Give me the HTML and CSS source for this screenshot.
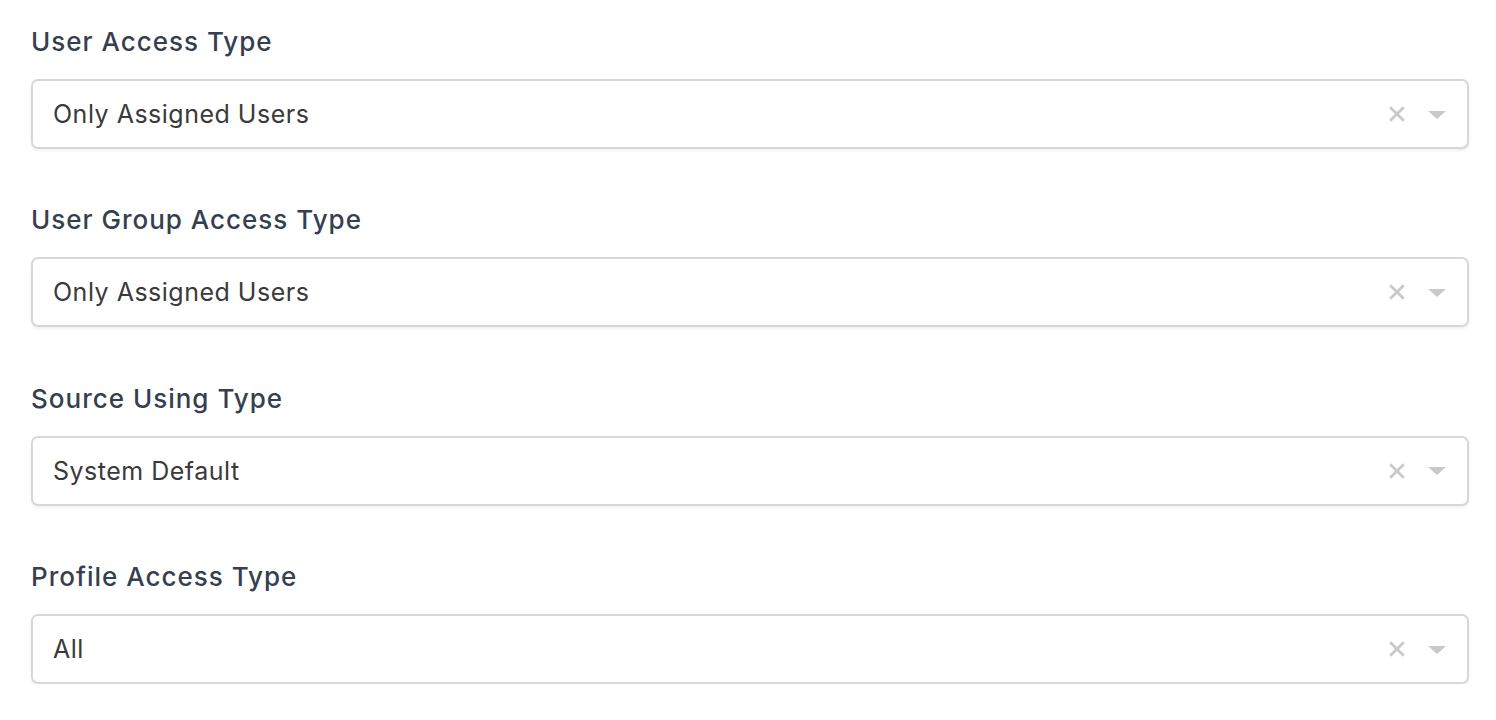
FILE: index.html
```html
<!DOCTYPE html>
<html lang="en">
<head>
<meta charset="utf-8">
<title>Access settings</title>
<link rel="stylesheet" href="styles.css">
</head>
<body>
<div class="form">
  <div class="field">
    <div class="label">User Access Type</div>
    <div class="select">
      <span class="value">Only Assigned Users</span>
      <span class="controls">
        <svg class="clear" viewBox="0 0 16 16" width="16" height="16"><path d="M1.2 1.2 L14.8 14.8 M14.8 1.2 L1.2 14.8" stroke="currentColor" stroke-width="2.8" stroke-linecap="butt"/></svg>
        <svg class="caret" viewBox="0 0 18 10" width="18" height="10"><path d="M0 1 H18 L9 9 Z" fill="currentColor"/></svg>
      </span>
    </div>
  </div>
  <div class="field">
    <div class="label">User Group Access Type</div>
    <div class="select">
      <span class="value">Only Assigned Users</span>
      <span class="controls">
        <svg class="clear" viewBox="0 0 16 16" width="16" height="16"><path d="M1.2 1.2 L14.8 14.8 M14.8 1.2 L1.2 14.8" stroke="currentColor" stroke-width="2.8" stroke-linecap="butt"/></svg>
        <svg class="caret" viewBox="0 0 18 10" width="18" height="10"><path d="M0 1 H18 L9 9 Z" fill="currentColor"/></svg>
      </span>
    </div>
  </div>
  <div class="field">
    <div class="label">Source Using Type</div>
    <div class="select">
      <span class="value">System Default</span>
      <span class="controls">
        <svg class="clear" viewBox="0 0 16 16" width="16" height="16"><path d="M1.2 1.2 L14.8 14.8 M14.8 1.2 L1.2 14.8" stroke="currentColor" stroke-width="2.8" stroke-linecap="butt"/></svg>
        <svg class="caret" viewBox="0 0 18 10" width="18" height="10"><path d="M0 1 H18 L9 9 Z" fill="currentColor"/></svg>
      </span>
    </div>
  </div>
  <div class="field">
    <div class="label">Profile Access Type</div>
    <div class="select">
      <span class="value">All</span>
      <span class="controls">
        <svg class="clear" viewBox="0 0 16 16" width="16" height="16"><path d="M1.2 1.2 L14.8 14.8 M14.8 1.2 L1.2 14.8" stroke="currentColor" stroke-width="2.8" stroke-linecap="butt"/></svg>
        <svg class="caret" viewBox="0 0 18 10" width="18" height="10"><path d="M0 1 H18 L9 9 Z" fill="currentColor"/></svg>
      </span>
    </div>
  </div>
</div>
</body>
</html>
```

FILE: styles.css
```css
html, body {
  margin: 0;
  padding: 0;
  background: #ffffff;
}

body {
  font-family: Inter, "Noto Sans", "Liberation Sans", sans-serif;
}

.form {
  padding: 24px 27px 0 31px;
  display: flex;
  flex-direction: column;
  gap: 53.4px;
}

.field {
  display: flex;
  flex-direction: column;
  gap: 19px;
}

.label {
  font-size: 26px;
  line-height: 36px;
  font-weight: 500;
  color: #363f50;
  letter-spacing: 1px;
}

.select {
  box-sizing: border-box;
  height: 70px;
  border: 2px solid #d4d7dc;
  border-radius: 7px;
  box-shadow: 0 2px 3px rgba(0, 0, 0, 0.06);
  display: flex;
  align-items: center;
  justify-content: space-between;
  padding: 0 21px 0 20px;
}

.value {
  font-size: 25px;
  color: #3a3a3a;
  letter-spacing: 0.5px;
}

.controls {
  display: flex;
  align-items: center;
  gap: 23px;
  color: #c9c9c9;
}

.caret {
  margin-top: 1px;
}
```
